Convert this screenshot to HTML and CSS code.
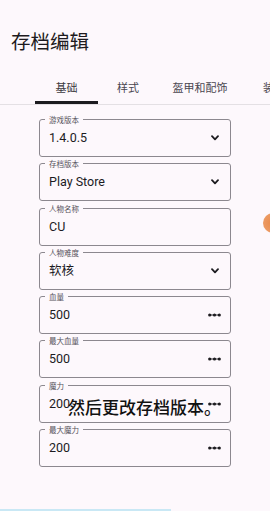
FILE: index.html
```html
<!DOCTYPE html>
<html lang="zh-CN">
<head>
<meta charset="utf-8">
<title>存档编辑</title>
<link rel="stylesheet" href="styles.css">
</head>
<body>
<div class="screen">
  <header class="header">
    <h1 class="title">存档编辑</h1>
  </header>
  <nav class="tabs">
    <div class="tab tab-active">基础</div>
    <div class="tab">样式</div>
    <div class="tab">盔甲和配饰</div>
    <div class="tab">装备</div>
  </nav>
  <main class="form">
    <div class="field">
      <span class="label">游戏版本</span>
      <span class="value">1.4.0.5</span>
      <svg class="chev" width="8" height="6" viewBox="0 0 8 6"><path d="M1 1.2 L4 4.3 L7 1.2" fill="none" stroke="#1c1b1f" stroke-width="1.8" stroke-linecap="round" stroke-linejoin="round"/></svg>
    </div>
    <div class="field">
      <span class="label">存档版本</span>
      <span class="value">Play Store</span>
      <svg class="chev" width="8" height="6" viewBox="0 0 8 6"><path d="M1 1.2 L4 4.3 L7 1.2" fill="none" stroke="#1c1b1f" stroke-width="1.8" stroke-linecap="round" stroke-linejoin="round"/></svg>
    </div>
    <div class="field">
      <span class="label">人物名称</span>
      <span class="value">CU</span>
    </div>
    <div class="field">
      <span class="label">人物难度</span>
      <span class="value">软核</span>
      <svg class="chev" width="8" height="6" viewBox="0 0 8 6"><path d="M1 1.2 L4 4.3 L7 1.2" fill="none" stroke="#1c1b1f" stroke-width="1.8" stroke-linecap="round" stroke-linejoin="round"/></svg>
    </div>
    <div class="field">
      <span class="label">血量</span>
      <span class="value">500</span>
      <svg class="dots" width="13" height="4" viewBox="0 0 13 4"><path d="M1.5 2 H11.5" stroke="#1c1b1f" stroke-width="0.9"/><circle cx="1.7" cy="2" r="1.6" fill="#1c1b1f"/><circle cx="6.5" cy="2" r="1.6" fill="#1c1b1f"/><circle cx="11.3" cy="2" r="1.6" fill="#1c1b1f"/></svg>
    </div>
    <div class="field">
      <span class="label">最大血量</span>
      <span class="value">500</span>
      <svg class="dots" width="13" height="4" viewBox="0 0 13 4"><path d="M1.5 2 H11.5" stroke="#1c1b1f" stroke-width="0.9"/><circle cx="1.7" cy="2" r="1.6" fill="#1c1b1f"/><circle cx="6.5" cy="2" r="1.6" fill="#1c1b1f"/><circle cx="11.3" cy="2" r="1.6" fill="#1c1b1f"/></svg>
    </div>
    <div class="field">
      <span class="label">魔力</span>
      <span class="value">200</span>
      <svg class="dots" width="13" height="4" viewBox="0 0 13 4"><path d="M1.5 2 H11.5" stroke="#1c1b1f" stroke-width="0.9"/><circle cx="1.7" cy="2" r="1.6" fill="#1c1b1f"/><circle cx="6.5" cy="2" r="1.6" fill="#1c1b1f"/><circle cx="11.3" cy="2" r="1.6" fill="#1c1b1f"/></svg>
    </div>
    <div class="field">
      <span class="label">最大魔力</span>
      <span class="value">200</span>
      <svg class="dots" width="13" height="4" viewBox="0 0 13 4"><path d="M1.5 2 H11.5" stroke="#1c1b1f" stroke-width="0.9"/><circle cx="1.7" cy="2" r="1.6" fill="#1c1b1f"/><circle cx="6.5" cy="2" r="1.6" fill="#1c1b1f"/><circle cx="11.3" cy="2" r="1.6" fill="#1c1b1f"/></svg>
    </div>
  </main>
  <div class="subtitle">然后更改存档版本。</div>
  <div class="bubble"></div>
  <div class="progress"></div>
</div>
</body>
</html>
```
FILE: styles.css
```css
html, body {
  margin: 0;
  padding: 0;
  background: #fdf8fc;
}
body {
  font-family: Roboto, "Noto Sans CJK SC", sans-serif;
  color: #1c1b1f;
}
.screen {
  position: relative;
  width: 270px;
  height: 511px;
  overflow: hidden;
  background: #fdf8fc;
}
.header {
  padding: 28px 0 0 11px;
}
.title {
  margin: 0;
  font-family: "Noto Sans CJK SC", sans-serif;
  font-size: 19.5px;
  line-height: 26px;
  font-weight: 400;
  color: #1d1b20;
}
.tabs {
  margin-top: 10px;
  padding-left: 35px;
  display: grid;
  grid-template-columns: 63px 60px 84px 64px;
  border-bottom: 1px solid #e4e0e4;
  white-space: nowrap;
}
.tab {
  font-family: "Noto Sans CJK SC", sans-serif;
  font-size: 11px;
  line-height: 16px;
  color: #4a4650;
  text-align: center;
  padding: 15px 0 6px;
  border-bottom: 3px solid transparent;
}
.tab-active {
  border-bottom-color: #1c1b1f;
  color: #3c3a40;
}
.form {
  padding: 14px 0 0 39px;
  display: flex;
  flex-direction: column;
  gap: 6.3px;
}
.field {
  position: relative;
  box-sizing: border-box;
  width: 192px;
  height: 38px;
  border: 1px solid #8c888f;
  border-radius: 3px;
  display: flex;
  align-items: center;
  padding: 0 10px 0 9px;
}
.label {
  position: absolute;
  left: 5px;
  top: -5px;
  padding: 0 4px;
  background: #fdf8fc;
  font-family: "Noto Sans CJK SC", sans-serif;
  font-size: 7.5px;
  line-height: 9px;
  color: #55515a;
}
.value {
  flex: 1;
  font-family: Roboto, "Noto Sans CJK SC", sans-serif;
  font-size: 12.5px;
  line-height: 16px;
  color: #1c1b1f;
}
.chev {
  display: block;
  margin-right: 1px;
}
.dots {
  display: block;
  margin-right: -1px;
}
.subtitle {
  position: absolute;
  left: 68px;
  top: 396px;
  font-family: "Noto Sans CJK SC", sans-serif;
  font-size: 17px;
  line-height: 21px;
  font-weight: 500;
  color: #111;
  white-space: nowrap;
}
.bubble {
  position: absolute;
  left: 263px;
  top: 213px;
  width: 20px;
  height: 20px;
  border-radius: 50%;
  background: radial-gradient(circle at 45% 50%, #e98a4a 0%, #ec9a63 60%, #f3c2a0 100%);
  filter: blur(0.6px);
}
.progress {
  position: absolute;
  left: 0;
  bottom: 0;
  width: 171px;
  height: 2px;
  background: #c9e8f5;
}
```
